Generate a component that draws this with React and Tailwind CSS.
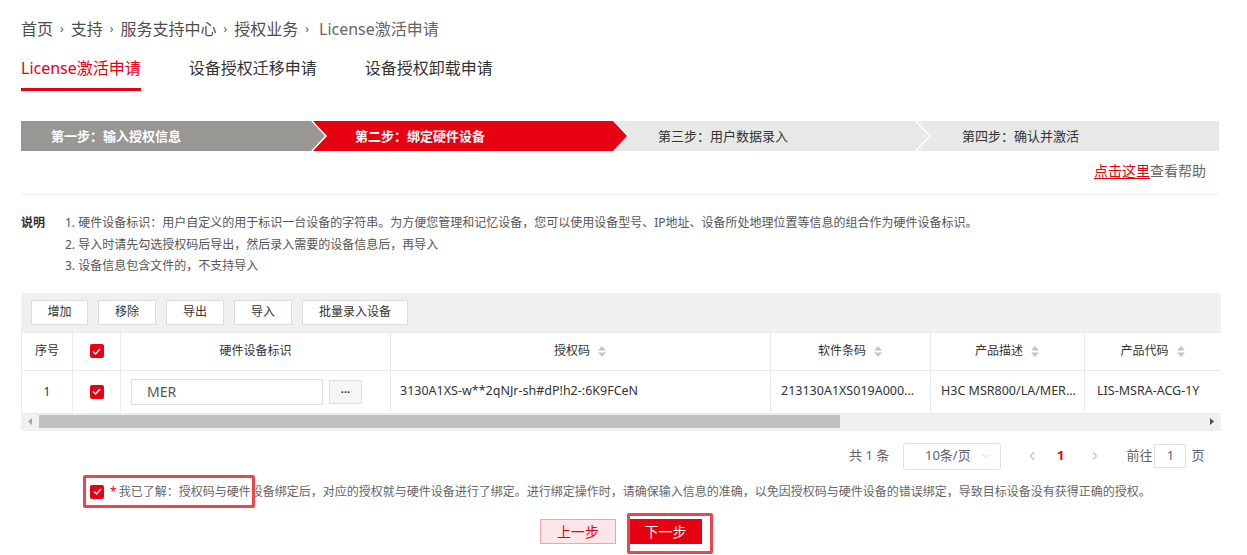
import { ChevronDown, ChevronLeft, ChevronRight } from "lucide-react";

const crumbs = ["首页", "支持", "服务支持中心", "授权业务"];

const steps = [
  { label: "第一步：输入授权信息", cls: "w-[304px] bg-[#999794] text-white font-bold pl-[30px] [clip-path:polygon(0_0,calc(100%_-_14px)_0,100%_50%,calc(100%_-_14px)_100%,0_100%)]" },
  { label: "第二步：绑定硬件设备", cls: "w-[314px] -ml-[12px] bg-[#e60012] text-white font-bold pl-[42px] [clip-path:polygon(0_0,calc(100%_-_14px)_0,100%_50%,calc(100%_-_14px)_100%,0_100%,14px_50%)]" },
  { label: "第三步：用户数据录入", cls: "w-[314px] -ml-[12px] bg-[#e8e8e6] text-[#333] pl-[43px] [clip-path:polygon(0_0,calc(100%_-_14px)_0,100%_50%,calc(100%_-_14px)_100%,0_100%,14px_50%)]" },
  { label: "第四步：确认并激活", cls: "flex-1 -ml-[12px] bg-[#e8e8e6] text-[#333] pl-[45px] [clip-path:polygon(0_0,100%_0,100%_100%,0_100%,14px_50%)]" },
];

const notes = [
  "1. 硬件设备标识：用户自定义的用于标识一台设备的字符串。为方便您管理和记忆设备，您可以使用设备型号、IP地址、设备所处地理位置等信息的组合作为硬件设备标识。",
  "2. 导入时请先勾选授权码后导出，然后录入需要的设备信息后，再导入",
  "3. 设备信息包含文件的，不支持导入",
];

const tools = [
  { t: "增加", w: "w-[57px]" },
  { t: "移除", w: "w-[58px]" },
  { t: "导出", w: "w-[58px]" },
  { t: "导入", w: "w-[58px]" },
  { t: "批量录入设备", w: "w-[106px]" },
];

function Check() {
  return (
    <span className="inline-flex h-[14px] w-[14px] items-center justify-center rounded-[2px] bg-[#e60012]">
      <svg width="9" height="7" viewBox="0 0 9 7" fill="none">
        <path d="M1 3.5 L3.5 6 L8 1" stroke="white" strokeWidth="1.4" />
      </svg>
    </span>
  );
}

function Sort() {
  return (
    <svg width="10" height="13" viewBox="0 0 10 13" className="ml-[7px] inline-block">
      <path d="M5 1 L9 5.5 L1 5.5 Z" fill="#c0c4cc" />
      <path d="M5 12 L9 7.5 L1 7.5 Z" fill="#c0c4cc" />
    </svg>
  );
}

export default function App() {
  return (
    <div className="min-h-screen w-[1247px] bg-white font-['Noto_Sans','Noto_Sans_CJK_SC',sans-serif] text-[#333]">
      <div className="ml-[21px] w-[1198px]">
        {/* breadcrumb */}
        <div className="mt-[19px] flex h-[20px] items-center text-[16px] leading-[20px] text-[#4d4d4d]">
          {crumbs.map((c) => (
            <span key={c} className="flex items-center">
              <span>{c}</span>
              <span className="mx-[7px] text-[12px] text-[#555]">›</span>
            </span>
          ))}
          <span className="ml-[3px] text-[#666]">License激活申请</span>
        </div>

        {/* tabs */}
        <div className="mt-[12px] flex gap-[48px] text-[16px] leading-[24px]">
          <div className="h-[40px] border-b-[3px] border-[#e60012] pt-[5px] text-[#e60012]">License激活申请</div>
          <div className="h-[40px] pt-[5px] text-[#333]">设备授权迁移申请</div>
          <div className="h-[40px] pt-[5px] text-[#333]">设备授权卸载申请</div>
        </div>

        {/* stepper */}
        <div className="mt-[30px] flex h-[30px] overflow-hidden text-[13px] leading-[30px]">
          {steps.map((s) => (
            <div key={s.label} className={`h-[30px] shrink-0 ${s.cls}`}>
              {s.label}
            </div>
          ))}
        </div>

        <div className="mt-[10px] flex h-[20px] justify-end pr-[13px] text-[14px] leading-[20px] text-[#666]">
          <span className="text-[#e60012] underline underline-offset-2">点击这里</span>
          <span>查看帮助</span>
        </div>

        <div className="mt-[13px] h-px bg-[#ececec]" />

        {/* notes */}
        <div className="mt-[17px] flex text-[12px] leading-[21.5px]">
          <div className="w-[44px] font-bold text-[#333]">说明</div>
          <div className="text-[#555]">
            {notes.map((n) => (
              <div key={n}>{n}</div>
            ))}
          </div>
        </div>

        {/* table area */}
        <div className="mt-[16px] w-[1200px] bg-[#f0f0f0] pb-[2px]">
          <div className="flex gap-[10px] px-[10px] py-[7px]">
            {tools.map((b) => (
              <div
                key={b.t}
                className={`flex h-[25px] items-center justify-center border border-[#dcdcdc] bg-white text-[12px] text-[#333] ${b.w}`}
              >
                {b.t}
              </div>
            ))}
          </div>

          <div className="overflow-hidden bg-white">
            <table className="w-[1300px] table-fixed border-collapse text-[12px] text-[#333]">
              <colgroup>
                <col className="w-[51px]" />
                <col className="w-[48px]" />
                <col className="w-[270px]" />
                <col className="w-[380px]" />
                <col className="w-[160px]" />
                <col className="w-[154px]" />
                <col className="w-[237px]" />
              </colgroup>
              <thead>
                <tr className="h-[38px]">
                  <th className="border border-[#e8eaef] font-normal">序号</th>
                  <th className="border border-[#e8eaef] font-normal">
                    <div className="flex justify-center"><Check /></div>
                  </th>
                  <th className="border border-[#e8eaef] font-normal">硬件设备标识</th>
                  <th className="border border-[#e8eaef] font-normal">
                    <span className="inline-flex items-center">授权码<Sort /></span>
                  </th>
                  <th className="border border-[#e8eaef] font-normal">
                    <span className="inline-flex items-center">软件条码<Sort /></span>
                  </th>
                  <th className="border border-[#e8eaef] font-normal">
                    <span className="inline-flex items-center">产品描述<Sort /></span>
                  </th>
                  <th className="border border-[#e8eaef] pr-[100px] text-center font-normal">
                    <span className="inline-flex items-center">产品代码<Sort /></span>
                  </th>
                </tr>
              </thead>
              <tbody>
                <tr className="h-[43px]">
                  <td className="border border-[#e8eaef] text-center">1</td>
                  <td className="border border-[#e8eaef]">
                    <div className="flex justify-center"><Check /></div>
                  </td>
                  <td className="border border-[#e8eaef] pl-[10px]">
                    <div className="flex items-center gap-[6px]">
                      <div className="flex h-[26px] w-[192px] items-center border border-[#dcdfe6] pl-[15px] text-[14px] text-[#555]">
                        MER
                      </div>
                      <div className="flex h-[24px] w-[33px] items-center justify-center border border-[#dcdfe6] bg-[#f5f6f8] text-[11px] font-bold leading-none text-[#333]">
                        ···
                      </div>
                    </div>
                  </td>
                  <td className="border border-[#e8eaef] pl-[9px] text-[12.5px]">3130A1XS-w**2qNJr-sh#dP!h2-:6K9FCeN</td>
                  <td className="border border-[#e8eaef] pl-[10px] text-[12.5px]">213130A1XS019A000...</td>
                  <td className="border border-[#e8eaef] pl-[10px] text-[12.5px]">H3C MSR800/LA/MER...</td>
                  <td className="border border-[#e8eaef] pl-[12px] text-[12.5px]">LIS-MSRA-ACG-1Y</td>
                </tr>
              </tbody>
            </table>
          </div>

          {/* scrollbar */}
          <div className="flex h-[15px] items-center">
            <div className="flex w-[18px] justify-center">
              <svg width="4" height="7" viewBox="0 0 4 7"><path d="M4 0 L0 3.5 L4 7 Z" fill="#a3a3a3" /></svg>
            </div>
            <div className="flex h-[15px] flex-1 items-center">
              <div className="h-[13px] w-[801px] bg-[#c1c1c1]" />
            </div>
            <div className="flex w-[18px] justify-center">
              <svg width="4" height="7" viewBox="0 0 4 7"><path d="M0 0 L4 3.5 L0 7 Z" fill="#505050" /></svg>
            </div>
          </div>
        </div>

        {/* pagination */}
        <div className="mt-[12px] flex h-[27px] items-center text-[13px] text-[#606266]">
          <div className="ml-[828px] w-[54px]">共 1 条</div>
          <div className="flex h-[27px] w-[98px] items-center justify-between rounded-[3px] border border-[#dcdfe6] pl-[21px] pr-[8px]">
            <span>10条/页</span>
            <ChevronDown size={12} strokeWidth={1.5} color="#c0c4cc" />
          </div>
          <ChevronLeft size={14} strokeWidth={2} color="#c0c4cc" className="ml-[24px]" />
          <span className="ml-[18px] font-bold text-[#e60012]">1</span>
          <ChevronRight size={14} strokeWidth={2} color="#c0c4cc" className="ml-[24px]" />
          <span className="ml-[24px]">前往</span>
          <div className="ml-[2px] flex h-[24px] w-[32px] items-center justify-center border border-[#dcdfe6]">1</div>
          <span className="ml-[5px]">页</span>
        </div>

        {/* agreement */}
        <div className="relative mt-[12px] flex h-[20px] items-center pl-[69px] text-[12px] text-[#666]">
          <Check />
          <span className="ml-[6px] text-[#e60012]">*</span>
          <span className="ml-[2px]">我已了解：授权码与硬件设备绑定后，对应的授权就与硬件设备进行了绑定。进行绑定操作时，请确保输入信息的准确，以免因授权码与硬件设备的错误绑定，导致目标设备没有获得正确的授权。</span>
          <div className="pointer-events-none absolute left-[62px] top-[-7px] h-[33px] w-[172px] rounded-[2px] border-[3px] border-[#e8484a]" />
        </div>

        {/* buttons */}
        <div className="relative mt-[17px] flex gap-[13px] pl-[519px] text-[14px]">
          <div className="flex h-[25px] w-[76px] items-center justify-center border border-[#f3a3aa] bg-[#fde6e8] text-[#e60012]">
            上一步
          </div>
          <div className="flex h-[25px] w-[73px] items-center justify-center bg-[#e60012] text-white">
            下一步
          </div>
          <div className="pointer-events-none absolute left-[606px] top-[-6px] h-[41px] w-[86px] rounded-[2px] border-[3px] border-[#e8484a]" />
        </div>
      </div>
    </div>
  );
}
